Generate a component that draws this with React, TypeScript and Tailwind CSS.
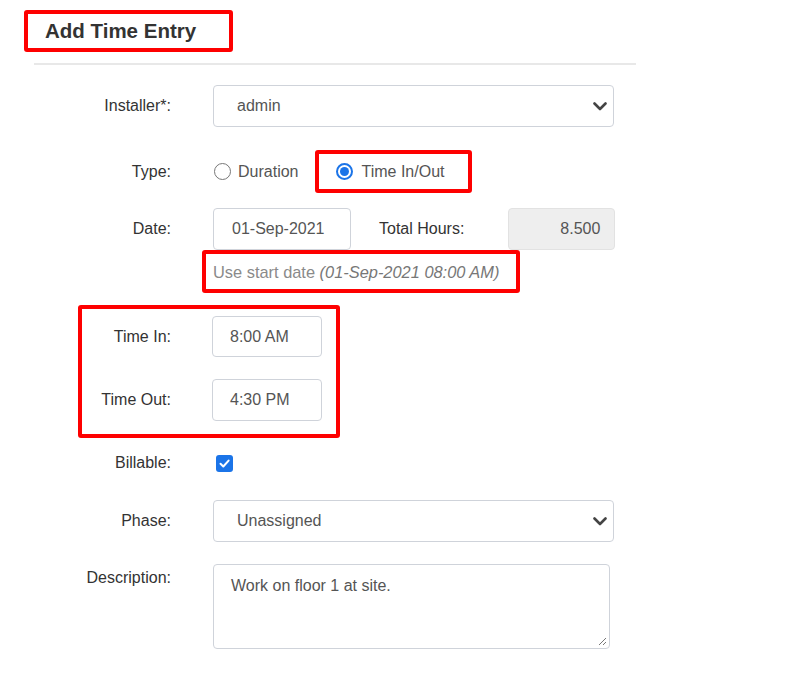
import React from 'react';

const font = { fontFamily: '"Liberation Sans", Arial, sans-serif' };

function Chevron() {
  return (
    <svg width="14" height="9" viewBox="0 0 14 9" className="shrink-0">
      <path d="M1.5 1.5 L7 7 L12.5 1.5" fill="none" stroke="#444" strokeWidth="2.6" strokeLinecap="round" strokeLinejoin="round" />
    </svg>
  );
}

function Label({ children, w = 'w-[171px]' }: { children: React.ReactNode; w?: string }) {
  return <div className={`${w} shrink-0 text-right text-[16px] text-[#333]`}>{children}</div>;
}

function Select({ value }: { value: string }) {
  return (
    <div className="w-[401px] h-[42px] border border-[#cfd3da] rounded-[4px] bg-white flex items-center justify-between pl-[23px] pr-[6px]">
      <span className="text-[16px] text-[#555]">{value}</span>
      <Chevron />
    </div>
  );
}

function Radio({ checked }: { checked?: boolean }) {
  return checked ? (
    <span className="w-[17px] h-[17px] rounded-full border-2 border-[#1b74e8] flex items-center justify-center">
      <span className="w-[9px] h-[9px] rounded-full bg-[#1b74e8]" />
    </span>
  ) : (
    <span className="w-[17px] h-[17px] rounded-full border border-[#777] bg-white" />
  );
}

export default function App() {
  return (
    <div className="w-[809px] h-[689px] bg-white relative overflow-hidden" style={font}>
      {/* title */}
      <div className="ml-[24px] pt-[10px]">
        <div className="w-[209px] h-[42px] border-4 border-[#fe0000] rounded-[3px] flex items-center pl-[17px]">
          <h2 className="text-[20.5px] font-bold text-[#333] leading-none">Add Time Entry</h2>
        </div>
      </div>
      <div className="ml-[34px] w-[602px] h-[2px] bg-[#e8e8e8] mt-[11px]" />

      {/* installer */}
      <div className="flex items-center mt-[20px]">
        <Label>Installer*:</Label>
        <div className="ml-[42px]">
          <Select value="admin" />
        </div>
      </div>

      {/* type */}
      <div className="flex items-center mt-[23px] h-[43px]">
        <Label>Type:</Label>
        <div className="ml-[43px] flex items-center">
          <Radio />
          <span className="ml-[7px] text-[16px] text-[#555]">Duration</span>
          <div className="ml-[17px] w-[157px] h-[43px] border-4 border-[#fe0000] rounded-[3px] flex items-center pl-[17px]">
            <Radio checked />
            <span className="ml-[8px] text-[16px] text-[#555]">Time In/Out</span>
          </div>
        </div>
      </div>

      {/* date */}
      <div className="flex items-center mt-[15px]">
        <Label>Date:</Label>
        <div className="ml-[42px] flex items-center">
          <div className="w-[138px] h-[42px] border border-[#cfd3da] rounded-[4px] flex items-center pl-[18px] text-[16px] text-[#555]">
            01-Sep-2021
          </div>
          <span className="ml-[28px] text-[16px] text-[#333]">Total Hours:</span>
          <div className="ml-[44px] w-[107px] h-[42px] bg-[#eeeeee] border border-[#e2e2e2] rounded-[4px] flex items-center justify-end pr-[14px] text-[16px] text-[#555]">
            8.500
          </div>
        </div>
      </div>

      {/* hint */}
      <div className="ml-[202px] w-[318px] h-[43px] border-4 border-[#fe0000] rounded-[3px] pl-[7px] pt-[6px] text-[16.4px] text-[#8a8a8a]">
        Use start date <span className="italic text-[#777]">(01-Sep-2021 08:00 AM)</span>
      </div>

      {/* time in / out */}
      <div className="ml-[78px] mt-[12px] w-[262px] h-[133px] border-4 border-[#fe0000] rounded-[3px] pt-[7px]">
        <div className="flex items-center">
          <Label w="w-[89px]">Time In:</Label>
          <div className="ml-[41px] w-[110px] h-[41px] border border-[#cfd3da] rounded-[4px] flex items-center pl-[17px] text-[16px] text-[#555]">
            8:00 AM
          </div>
        </div>
        <div className="flex items-center mt-[22px]">
          <Label w="w-[89px]">Time Out:</Label>
          <div className="ml-[41px] w-[110px] h-[42px] border border-[#cfd3da] rounded-[4px] flex items-center pl-[17px] text-[16px] text-[#555]">
            4:30 PM
          </div>
        </div>
      </div>

      {/* billable */}
      <div className="flex items-center mt-[13px]">
        <Label>Billable:</Label>
        <div className="ml-[45px] w-[17px] h-[17px] rounded-[3px] bg-[#1b74e8] flex items-center justify-center">
          <svg width="13" height="13" viewBox="0 0 13 13">
            <path d="M2.5 6.8 L5.3 9.5 L10.6 3.6" fill="none" stroke="#fff" strokeWidth="2" strokeLinecap="round" strokeLinejoin="round" />
          </svg>
        </div>
      </div>

      {/* phase */}
      <div className="flex items-center mt-[25px]">
        <Label>Phase:</Label>
        <div className="ml-[42px]">
          <Select value="Unassigned" />
        </div>
      </div>

      {/* description */}
      <div className="flex items-start mt-[22px]">
        <div className="pt-[2px]">
          <Label>Description:</Label>
        </div>
        <div className="ml-[42px] relative w-[397px] h-[85px] border border-[#cfd3da] rounded-[4px] pl-[17px] pt-[9px] text-[16px] text-[#555]">
          Work on floor 1 at site.
          <svg width="9" height="9" viewBox="0 0 9 9" className="absolute right-[2px] bottom-[2px]">
            <path d="M8 1 L1 8 M8 5 L5 8" stroke="#777" strokeWidth="1" />
          </svg>
        </div>
      </div>
    </div>
  );
}
